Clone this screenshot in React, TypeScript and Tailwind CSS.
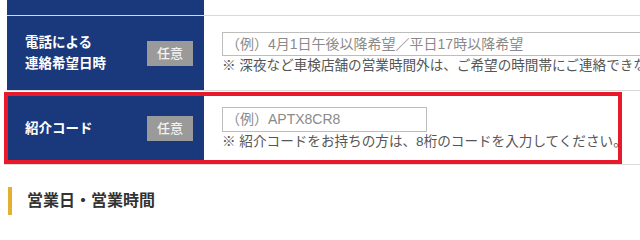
const font = "font-['Liberation_Sans','Noto_Sans_CJK_JP',sans-serif]";

function Badge() {
  return (
    <span className="flex h-[25px] w-[46px] shrink-0 items-center justify-center bg-[#9a9a9a] text-[13px] font-medium leading-none text-[#f2f2f2]">
      任意
    </span>
  );
}

export default function App() {
  return (
    <div className={`${font} h-[219px] w-[640px] overflow-hidden bg-white`}>
      <div className="pl-[7px]">
        {/* top row (cut off) */}
        <div className="flex h-[16px] border-b border-[#d9d9d9]">
          <div className="w-[197px] bg-[#1a397c]" />
          <div className="flex-1" />
        </div>

        {/* 電話による連絡希望日時 */}
        <div className="flex h-[75px] border-b border-[#d9d9d9]">
          <div className="flex w-[197px] shrink-0 items-center justify-between bg-[#1a397c] pl-[18px] pr-[11px]">
            <p className="text-[13.5px] font-bold leading-[21px] text-white">
              電話による
              <br />
              連絡希望日時
            </p>
            <Badge />
          </div>
          <div className="flex min-w-0 flex-1 flex-col justify-center pl-[18px]">
            <input
              className="h-[24px] w-[520px] shrink-0 border border-[#bdbdbd] px-[3px] text-[14px] outline-none placeholder:text-[#8a8a8a]"
              placeholder="（例）4月1日午後以降希望／平日17時以降希望"
            />
            <p className="mt-[1px] whitespace-nowrap text-[13.6px] leading-[17px] text-[#555]">
              ※ 深夜など車検店舗の営業時間外は、ご希望の時間帯にご連絡できない場合がございます。
            </p>
          </div>
        </div>

        {/* 紹介コード (highlighted) */}
        <div className="-ml-[3px] mt-[1px] w-[618px] border-4 border-[#e8192b]">
          <div className="flex h-[64px]">
            <div className="flex w-[196px] shrink-0 items-center justify-between bg-[#1a397c] pl-[17px] pr-[11px]">
              <p className="text-[13.5px] font-bold leading-[21px] text-white">紹介コード</p>
              <Badge />
            </div>
            <div className="flex min-w-0 flex-1 flex-col justify-center pl-[18px]">
              <input
                className="h-[25px] w-[205px] shrink-0 border border-[#bdbdbd] px-[3px] text-[14px] outline-none placeholder:text-[#8a8a8a]"
                placeholder="（例）APTX8CR8"
              />
              <p className="mt-[1px] whitespace-nowrap text-[13.6px] leading-[17px] text-[#555]">
                ※ 紹介コードをお持ちの方は、8桁のコードを入力してください。
              </p>
            </div>
          </div>
        </div>
        <div className="-ml-[3px] border-t border-[#dcdcdc]" />
      </div>

      <div className="ml-[8px] mt-[22px] flex h-[28px] items-center border-l-4 border-[#e3b033] pl-[15px]">
        <h2 className="text-[16px] font-bold text-[#333]">営業日・営業時間</h2>
      </div>
    </div>
  );
}
